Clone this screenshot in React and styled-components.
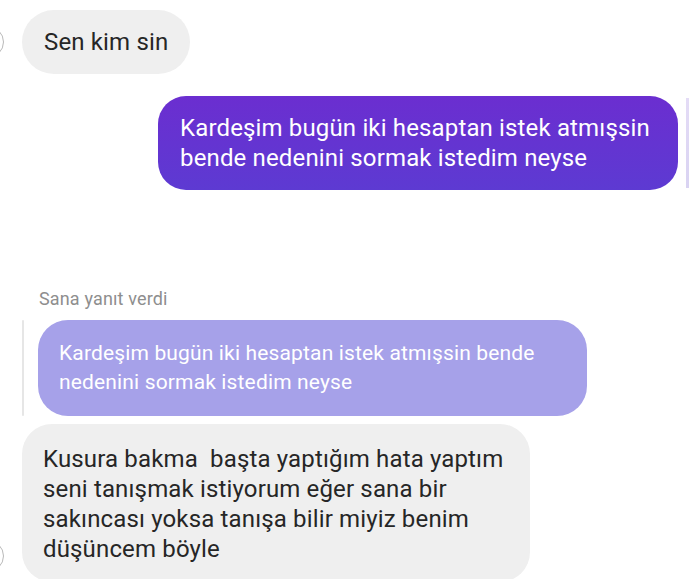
import React from "react";
import styled, { createGlobalStyle } from "styled-components";

const Global = createGlobalStyle`
  html, body { margin: 0; padding: 0; background: #ffffff; }
  body { font-family: Roboto, "Noto Sans", "Liberation Sans", sans-serif; }
`;

const Page = styled.div`
  width: 690px;
  height: 579px;
  overflow: hidden;
  background: #ffffff;
  display: flex;
  flex-direction: column;
  padding-top: 10px;
  box-sizing: border-box;
`;

const IncomingRow = styled.div`
  display: flex;
  align-items: ${(p) => (p.$avatarBottom ? "flex-end" : "center")};
  margin-top: ${(p) => p.$mt || 0}px;
`;

const Avatar = styled.div`
  width: 32px;
  height: 32px;
  flex: none;
  border-radius: 50%;
  border: 1.5px solid #b9b9b9;
  box-sizing: border-box;
  margin-left: -28px;
  margin-right: 18px;
  margin-bottom: ${(p) => p.$mb || 0}px;
`;

const Bubble = styled.div`
  box-sizing: border-box;
  font-size: ${(p) => p.$size || 24}px;
  line-height: ${(p) => p.$lh || 30}px;
  letter-spacing: 0.15px;
  padding: ${(p) => p.$pad || "17px 22px"};
  border-radius: ${(p) => p.$radius || 30}px;
  color: ${(p) => p.$color || "#262626"};
  background: ${(p) => p.$bg || "#efefef"};
  white-space: pre;
  width: ${(p) => (p.$width ? `${p.$width}px` : "auto")};
  flex: none;
`;

const OutgoingRow = styled.div`
  display: flex;
  justify-content: flex-end;
  align-items: stretch;
  margin-top: 22px;
  gap: 8px;
`;

const EdgeSliver = styled.div`
  width: 3px;
  margin: 2px 1px 2px 0;
  background: linear-gradient(180deg, #e4dcf6, #d9d3f2);
`;

const ReplyLabel = styled.div`
  margin-top: 99px;
  margin-left: 39px;
  font-size: 18px;
  line-height: 20px;
  letter-spacing: 0.15px;
  color: #8e8e8e;
`;

const QuoteRow = styled.div`
  display: flex;
  margin-top: 11px;
  margin-left: 22px;
  gap: 14px;
`;

const QuoteBar = styled.div`
  width: 2px;
  background: #e6e6e6;
  border-radius: 1px;
`;

export default function App() {
  return (
    <>
      <Global />
      <Page>
        <IncomingRow>
          <Avatar />
          <Bubble $radius={32}>Sen kim sin</Bubble>
        </IncomingRow>

        <OutgoingRow>
          <Bubble
            $width={520}
            $radius={28}
            $color="#ffffff"
            $bg="linear-gradient(180deg, #6b2ed0 0%, #5d3ad2 100%)"
          >
            {"Kardeşim bugün iki hesaptan istek atmışsin\nbende nedenini sormak istedim neyse"}
          </Bubble>
          <EdgeSliver />
        </OutgoingRow>

        <ReplyLabel>Sana yanıt verdi</ReplyLabel>

        <QuoteRow>
          <QuoteBar />
          <Bubble
            $width={549}
            $size={21}
            $lh={29}
            $pad="19px 21px"
            $radius={30}
            $color="#ffffff"
            $bg="#a6a1e9"
          >
            {"Kardeşim bugün iki hesaptan istek atmışsin bende\nnedenini sormak istedim neyse"}
          </Bubble>
        </QuoteRow>

        <IncomingRow $mt={8} $avatarBottom>
          <Avatar $mb={10} />
          <Bubble $width={508} $pad="20px 21px 18px" $radius={30}>
            {"Kusura bakma  başta yaptığım hata yaptım\nseni tanışmak istiyorum eğer sana bir\nsakıncası yoksa tanışa bilir miyiz benim\ndüşüncem böyle"}
          </Bubble>
        </IncomingRow>
      </Page>
    </>
  );
}
